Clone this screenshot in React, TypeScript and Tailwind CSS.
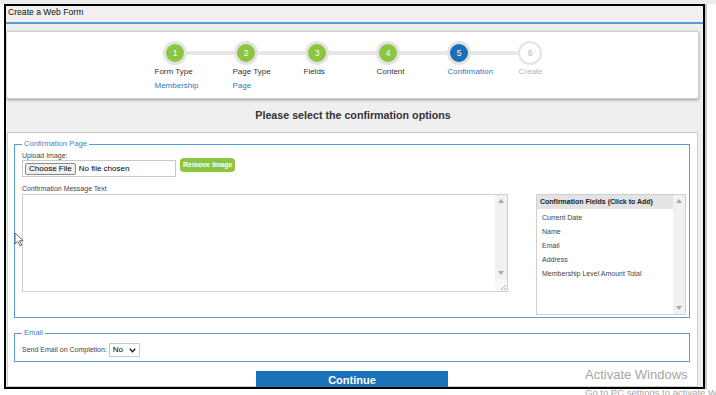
import React from 'react';

type Step = {
  n: string;
  label: string;
  sub?: string;
  state: 'done' | 'active' | 'todo';
  off: string;
};

const steps: Step[] = [
  { n: '1', label: 'Form Type', sub: 'Membership', state: 'done', off: 'ml-[15px]' },
  { n: '2', label: 'Page Type', sub: 'Page', state: 'done', off: 'ml-[22px]' },
  { n: '3', label: 'Fields', state: 'done', off: 'ml-[22px]' },
  { n: '4', label: 'Content', state: 'done', off: 'ml-[24px]' },
  { n: '5', label: 'Confirmation', state: 'active', off: 'ml-[24px]' },
  { n: '6', label: 'Create', state: 'todo', off: 'ml-[24px]' },
];

const fields = ['Current Date', 'Name', 'Email', 'Address', 'Membership Level Amount Total'];

function ArrowUp() {
  return (
    <svg width="6" height="4" viewBox="0 0 6 4">
      <path d="M0 4 L3 0 L6 4 Z" fill="#a8a8a8" />
    </svg>
  );
}

function ArrowDown() {
  return (
    <svg width="6" height="4" viewBox="0 0 6 4">
      <path d="M0 0 L3 4 L6 0 Z" fill="#a8a8a8" />
    </svg>
  );
}

export default function App() {
  return (
    <div className="relative w-[716px] h-[395px] overflow-hidden bg-white font-['Liberation_Sans',Arial,sans-serif]">
      <div className="h-[4px] bg-[#ececec]" />
      <div className="ml-[4px] w-[701px] h-[385px] border-2 border-black bg-[#efefef] overflow-hidden flex flex-col shadow-[2px_0_0_#c8c8c8]">
        {/* Header */}
        <div className="shrink-0 h-[16px] bg-[#f0f0f0] pl-[2px] text-[8.6px] leading-[13px] text-[#111]">Create a Web Form</div>
        <div className="shrink-0 h-[2px] bg-[#5a9ad6]" />

        {/* Stepper card */}
        <div className="shrink-0 mt-[7px] mr-[4px] h-[68px] bg-white border border-[#cfcfcf] rounded-[2px] shadow-[0_1px_3px_rgba(0,0,0,0.35)] flex justify-center pt-[9px]">
          {steps.map((s, i) => (
            <div key={s.n} className="w-[71px] flex flex-col">
              <div className="flex items-center h-[24px]">
                <div className={i === 0 ? 'flex-1 h-[4px]' : 'flex-1 h-[4px] bg-[#e6e6e6]'} />
                {s.state === 'todo' ? (
                  <div className="w-[24px] h-[24px] rounded-full border-2 border-[#e3e3e3] bg-white flex items-center justify-center text-[8.5px] text-[#b8b8b8]">
                    {s.n}
                  </div>
                ) : (
                  <div
                    className={
                      s.state === 'active'
                        ? 'w-[24px] h-[24px] rounded-full border-[3px] border-[#e3e3e3] bg-[#1a6fb7] flex items-center justify-center text-[8.5px] text-white'
                        : 'w-[24px] h-[24px] rounded-full border-[3px] border-[#e3e3e3] bg-[#8cc63f] flex items-center justify-center text-[8.5px] text-white'
                    }
                  >
                    {s.n}
                  </div>
                )}
                <div className={i === steps.length - 1 ? 'flex-1 h-[4px]' : 'flex-1 h-[4px] bg-[#e6e6e6]'} />
              </div>
              <div className={`${s.off} whitespace-nowrap text-[8px] leading-[14px]`}>
                <div
                  className={
                    s.state === 'active' ? 'text-[#2a7bc2]' : s.state === 'todo' ? 'text-[#b5b5b5]' : 'text-[#333]'
                  }
                >
                  {s.label}
                </div>
                {s.sub && <div className="text-[#2a7bc2]">{s.sub}</div>}
              </div>
            </div>
          ))}
        </div>

        {/* Title */}
        <div className="shrink-0 h-[33px] flex items-center justify-center text-[10.7px] font-bold text-[#333] pr-[3px]">
          Please select the confirmation options
        </div>

        {/* Panel */}
        <div className="ml-[1px] mr-[5px] flex-1 min-h-0 bg-white border border-[#cccccc] pt-[6px] pl-[6px] pr-[7px]">
          <fieldset className="border border-[#5b9bd5] pl-[7px] pr-[3px] pb-[2px]">
            <legend className="px-[2px] text-[7.6px] leading-[10px] text-[#3a84c6]">Confirmation Page</legend>
            <div className="mt-[3px] text-[7px] leading-[8px] text-[#444]">Upload Image:</div>
            <div className="-mt-[2px] flex items-start">
              <div className="mt-[2px] w-[154px] h-[17px] border border-[#c8c8c8] flex items-center pl-[2px]">
                <div className="h-[12px] px-[3px] border border-[#8a8a8a] bg-[#efefef] rounded-[2px] text-[8px] leading-[10px] text-black">
                  Choose File
                </div>
                <div className="ml-[3px] text-[8px] leading-[10px] text-black">No file chosen</div>
              </div>
              <div className="ml-[4px] h-[14px] px-[3px] rounded-[4px] bg-[#8cc63f] text-white font-bold text-[7px] leading-[14px]">
                Remove Image
              </div>
            </div>
            <div className="mt-[7px] text-[7px] leading-[10px] text-[#444]">Confirmation Message Text</div>
            <div className="flex items-start">
              <div className="w-[486px] h-[98px] border border-[#cfcfcf] flex">
                <div className="flex-1" />
                <div className="w-[12px] flex flex-col">
                  <div className="h-[11px] bg-[#f1f1f1] flex items-center justify-center">
                    <ArrowUp />
                  </div>
                  <div className="flex-1 bg-[#f1f1f1]" />
                  <div className="h-[12px] bg-[#f1f1f1] flex items-center justify-center">
                    <ArrowDown />
                  </div>
                  <div className="h-[12px] bg-[#f7f7f7] flex items-end justify-end">
                    <svg width="8" height="8" viewBox="0 0 8 8">
                      <path d="M7 2 L2 7 M7 5 L5 7" stroke="#9a9a9a" strokeWidth="0.8" />
                    </svg>
                  </div>
                </div>
              </div>
              <div className="ml-[28px] w-[150px] h-[121px] border border-[#cfcfcf] flex">
                <div className="flex-1">
                  <div className="h-[14px] bg-[#e3e3e3] pl-[3px] text-[7px] leading-[14px] font-bold text-[#222] whitespace-nowrap">
                    Confirmation Fields (Click to Add)
                  </div>
                  <div className="mt-[2px]">
                    {fields.map((f) => (
                      <div key={f} className="pl-[5px] text-[7px] leading-[14px] text-[#444] whitespace-nowrap">
                        {f}
                      </div>
                    ))}
                  </div>
                </div>
                <div className="w-[12px] bg-[#f1f1f1] flex flex-col justify-between items-center py-[4px]">
                  <ArrowUp />
                  <ArrowDown />
                </div>
              </div>
            </div>
          </fieldset>

          <fieldset className="mt-[10px] border border-[#5b9bd5] pl-[7px] pr-[3px] pb-[4px]">
            <legend className="px-[2px] text-[7.6px] leading-[10px] text-[#3a84c6]">Email</legend>
            <div className="mt-[5px] flex items-center">
              <div className="text-[7px] leading-[10px] text-[#444]">Send Email on Completion:</div>
              <div className="ml-[2px] w-[31px] h-[14px] border border-[#c8c8c8] flex items-center justify-between pl-[3px] pr-[3px]">
                <span className="text-[8px] leading-[10px] text-black">No</span>
                <svg width="7" height="5" viewBox="0 0 7 5">
                  <path d="M0.8 0.8 L3.5 3.8 L6.2 0.8" stroke="#222" strokeWidth="1.4" fill="none" />
                </svg>
              </div>
            </div>
          </fieldset>

          <div className="mt-[9px] mx-auto w-[192px] h-[18px] bg-[#1a73ba] text-white font-bold text-[11px] flex items-center justify-center">
            Continue
          </div>
        </div>
      </div>

      {/* mouse cursor */}
      <svg className="absolute left-[14px] top-[232px]" width="11" height="15" viewBox="0 0 11 15">
        <path d="M1 1 L1 12 L3.8 9.4 L6 13.8 L7.8 13 L5.6 8.7 L9.2 8.7 Z" fill="#fff" stroke="#555" strokeWidth="0.9" />
      </svg>

      {/* Windows watermark */}
      <div className="absolute left-[585px] top-[367px] text-[13px] leading-[16px] text-[#a6a6a6] whitespace-nowrap">
        Activate Windows
      </div>
      <div className="absolute left-[585px] top-[387px] text-[9.5px] leading-[12px] text-[#a6a6a6] whitespace-nowrap">
        Go to PC settings to activate Windows.
      </div>
    </div>
  );
}
